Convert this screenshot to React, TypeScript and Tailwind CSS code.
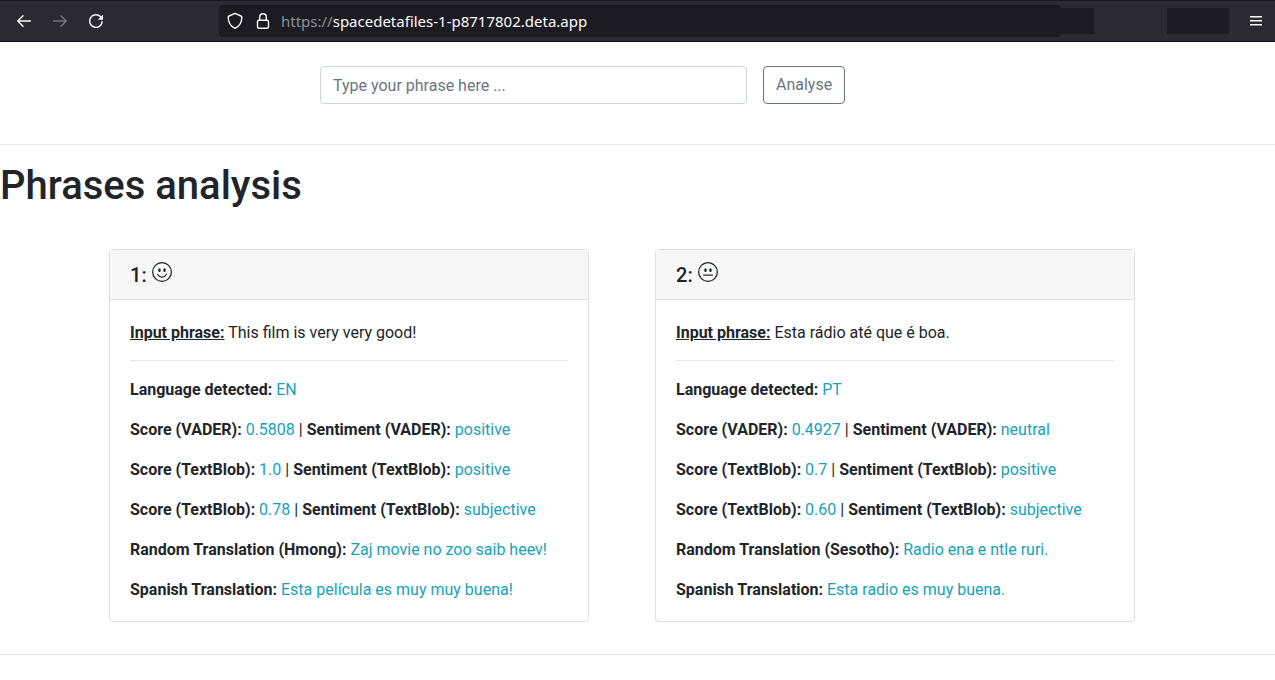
import React, { useState } from 'react';
import { BsEmojiNeutral, BsEmojiSmile } from 'react-icons/bs';

interface PhraseResult {
    id: number;
    mood: 'smile' | 'neutral';
    phrase: string;
    language: string;
    vader: { score: string; sentiment: string };
    polarity: { score: string; sentiment: string };
    subjectivity: { score: string; sentiment: string };
    random: { language: string; text: string };
    spanish: string;
}

const results: PhraseResult[] = [
    {
        id: 1,
        mood: 'smile',
        phrase: 'This film is very very good!',
        language: 'EN',
        vader: { score: '0.5808', sentiment: 'positive' },
        polarity: { score: '1.0', sentiment: 'positive' },
        subjectivity: { score: '0.78', sentiment: 'subjective' },
        random: { language: 'Hmong', text: 'Zaj movie no zoo saib heev!' },
        spanish: 'Esta película es muy muy buena!'
    },
    {
        id: 2,
        mood: 'neutral',
        phrase: 'Esta rádio até que é boa.',
        language: 'PT',
        vader: { score: '0.4927', sentiment: 'neutral' },
        polarity: { score: '0.7', sentiment: 'positive' },
        subjectivity: { score: '0.60', sentiment: 'subjective' },
        random: { language: 'Sesotho', text: 'Radio ena e ntle ruri.' },
        spanish: 'Esta radio es muy buena.'
    }
];

const BrowserBar: React.FC = () => (
    <header className="flex h-[42px] items-center border-t border-b border-t-[#1c1b22] border-b-[#0c0c0d] bg-[#2b2a33] text-[#fbfbfe]">
        <nav className="flex w-[219px] shrink-0 gap-5 pl-4">
            <button type="button" aria-label="Back">
                <svg width="16" height="16" viewBox="0 0 16 16" fill="none" stroke="currentColor" strokeWidth="1.4" strokeLinecap="round" strokeLinejoin="round">
                    <path d="M14.5 8H1.8M7 2.7 1.7 8 7 13.3" />
                </svg>
            </button>
            <button type="button" aria-label="Forward" disabled className="text-[#77767d]">
                <svg width="16" height="16" viewBox="0 0 16 16" fill="none" stroke="currentColor" strokeWidth="1.4" strokeLinecap="round" strokeLinejoin="round">
                    <path d="M1.5 8h12.7M9 2.7 14.3 8 9 13.3" />
                </svg>
            </button>
            <button type="button" aria-label="Reload">
                <svg width="16" height="16" viewBox="0 0 16 16" fill="none" stroke="currentColor" strokeWidth="1.4" strokeLinecap="round">
                    <path d="M14.2 8.6A6.3 6.3 0 1 1 12.4 3.6" />
                    <path d="M15 1.6v4.6a.5.5 0 0 1-.5.5H9.9z" fill="currentColor" stroke="none" />
                </svg>
            </button>
        </nav>
        <div className="flex h-8 min-w-0 flex-1 items-center rounded bg-[#1c1b22] pl-2">
            <svg width="16" height="18" viewBox="0 0 16 18" fill="none" stroke="currentColor" strokeWidth="1.4" strokeLinejoin="round" className="shrink-0">
                <path d="M8 1.4 14 4c.5.2.8.6.8 1.1 0 5.1-2 9.2-6.8 11.3C3.2 14.3 1.2 10.2 1.2 5.1c0-.5.3-.9.8-1.1z" />
            </svg>
            <svg width="16" height="18" viewBox="0 0 16 18" fill="none" stroke="currentColor" strokeWidth="1.4" className="ml-3 shrink-0">
                <rect x="2.5" y="8.3" width="11" height="8" rx="1.5" />
                <path d="M4.7 8.3V5a3.3 3.3 0 0 1 6.6 0v3.3" />
            </svg>
            <span className="ml-[10px] truncate font-['Noto_Sans',sans-serif] text-[15px] leading-6">
                <span className="text-[#8f8f96]">https://</span>spacedetafiles-1-p8717802.deta.app
            </span>
        </div>
        <div className="-ml-1 mr-[73px] h-[26px] w-[37px] bg-[#1c1b22]" />
        <div className="h-[26px] w-[62px] bg-[#1c1b22]" />
        <button type="button" aria-label="Open menu" className="mr-3 ml-5">
            <svg width="14" height="14" viewBox="0 0 14 14" fill="currentColor">
                <path d="M1 2h12v1.4H1zM1 6h12v1.4H1zM1 10h12v1.4H1z" />
            </svg>
        </button>
    </header>
);

const Value: React.FC<{ children: React.ReactNode }> = ({ children }) => (
    <span className="text-[#17a2b8]">{children}</span>
);

const ScoreRow: React.FC<{ source: string; score: string; sentiment: string }> = ({ source, score, sentiment }) => (
    <p>
        <b>Score ({source}):</b> <Value>{score}</Value> | <b>Sentiment ({source}):</b> <Value>{sentiment}</Value>
    </p>
);

const PhraseCard: React.FC<{ result: PhraseResult }> = ({ result }) => {
    const Mood = result.mood === 'smile' ? BsEmojiSmile : BsEmojiNeutral;

    return (
        <article className="rounded border border-[#dfdfdf] bg-white">
            <h2 className="flex h-[50px] items-center gap-[5px] border-b border-[#dfdfdf] bg-[#f7f7f7] px-5 text-xl font-medium">
                <span>{result.id}:</span>
                <Mood size={20} className="mb-[6px]" />
            </h2>
            <div className="px-5 pt-[21px] pb-[19px]">
                <p>
                    <b className="underline">Input phrase:</b> {result.phrase}
                </p>
                <hr className="mt-[15px] mb-[17px] border-[#e5e5e5]" />
                <div className="space-y-4">
                    <p>
                        <b>Language detected:</b> <Value>{result.language}</Value>
                    </p>
                    <ScoreRow source="VADER" {...result.vader} />
                    <ScoreRow source="TextBlob" {...result.polarity} />
                    <ScoreRow source="TextBlob" {...result.subjectivity} />
                    <p>
                        <b>Random Translation ({result.random.language}):</b> <Value>{result.random.text}</Value>
                    </p>
                    <p>
                        <b>Spanish Translation:</b> <Value>{result.spanish}</Value>
                    </p>
                </div>
            </div>
        </article>
    );
};

const App: React.FC = () => {
    const [phrase, setPhrase] = useState('');

    return (
        <div className="min-h-screen bg-white font-[Roboto,sans-serif] text-base text-[#212529]">
            <BrowserBar />
            <main>
                <form className="flex gap-4 pt-6 pb-10 pl-80" onSubmit={(e) => e.preventDefault()}>
                    <input
                        type="text"
                        aria-label="Phrase"
                        placeholder="Type your phrase here ..."
                        value={phrase}
                        onChange={(e) => setPhrase(e.target.value)}
                        className="h-[38px] w-[427px] rounded border border-[#ced4da] px-3 placeholder:text-[#6c757d]"
                    />
                    <button type="submit" className="h-[38px] rounded border border-[#6c757d] px-3 text-[#6c757d]">
                        Analyse
                    </button>
                </form>
                <hr className="border-[#e5e5e5]" />
                <h1 className="mt-[17px] text-[40px] leading-12 font-medium">Phrases analysis</h1>
                <section className="mt-[39px] mb-8 grid grid-cols-2 gap-[66px] pr-[140px] pl-[109px]">
                    {results.map((result) => (
                        <PhraseCard key={result.id} result={result} />
                    ))}
                </section>
                <hr className="border-[#e5e5e5]" />
            </main>
        </div>
    );
};

export default App;
